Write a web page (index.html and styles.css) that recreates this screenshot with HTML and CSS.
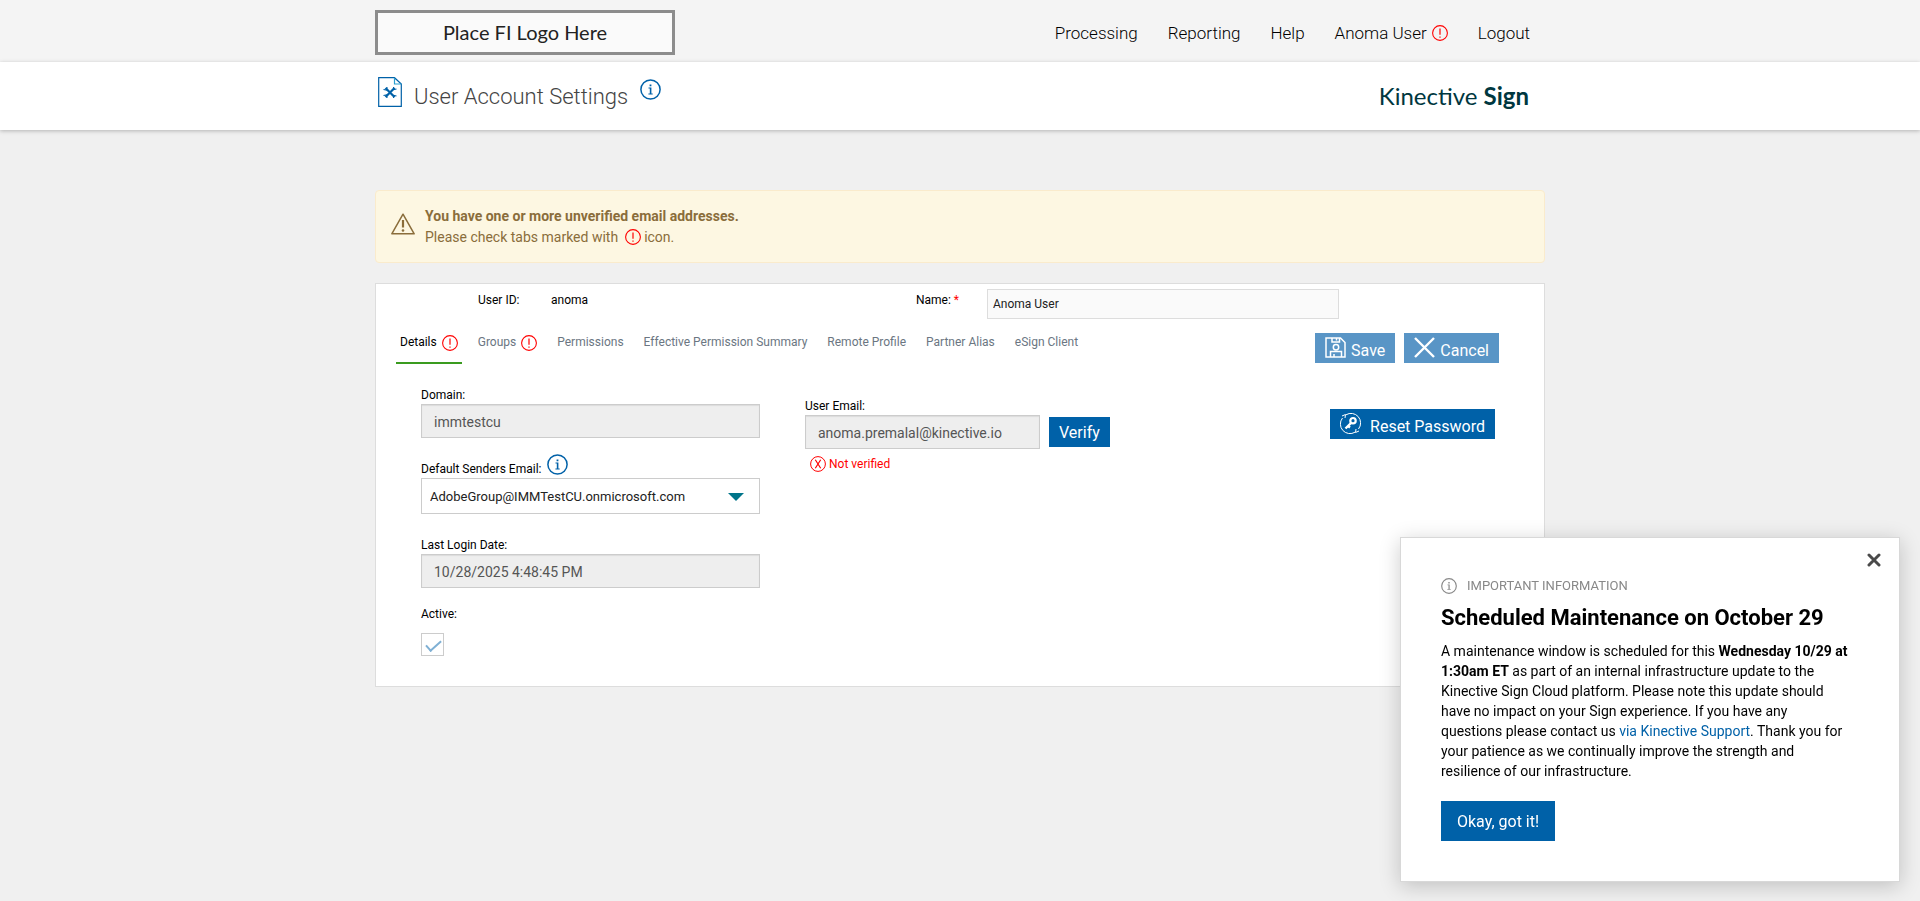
FILE: index.html
```html
<!DOCTYPE html>
<html lang="en">
<head>
  <meta charset="UTF-8" />
  <meta name="viewport" content="width=device-width, initial-scale=1.0"/>
  <title>User Account Settings</title>
  <link rel="stylesheet" href="styles.css">
</head>
<body>
  <!-- shared icons -->
  <svg class="sprite" aria-hidden="true">
    <symbol id="icon-alert" viewBox="0 0 16 16">
      <circle cx="8" cy="8" r="7.4" fill="none" stroke="currentColor" stroke-width="1.1"/>
      <path d="M8 3.5v6.3M8 11.4v1.3" stroke="currentColor" stroke-width="1.2"/>
    </symbol>
    <symbol id="icon-info" viewBox="0 0 21 21">
      <circle cx="10.5" cy="10.5" r="9.6" fill="none" stroke="currentColor" stroke-width="1.5"/>
      <path d="M9.6 5.4h1.8v1.8H9.6zM8.5 8.6h2.9v5.8h1.3v1H8.4v-1h1.4V9.6H8.5z" fill="currentColor"/>
    </symbol>
  </svg>

  <header class="topbar">
    <div class="container topbar-inner">
      <a href="#" class="fi-logo">Place FI Logo Here</a>
      <nav>
        <a href="#">Processing</a>
        <a href="#">Reporting</a>
        <a href="#">Help</a>
        <a href="#">Anoma User <svg class="icon-16 alert-icon"><use href="#icon-alert"/></svg></a>
        <a href="#">Logout</a>
      </nav>
    </div>
  </header>

  <div class="titlebar">
    <div class="container titlebar-inner">
      <svg class="page-icon" viewBox="0 0 24 30">
        <path d="M.7.7h15.8l6.8 6.3v22.300H.7z" fill="#fff" stroke="#0061a8" stroke-width="1.2"/>
        <path d="M16.500.7V7h6.800" fill="none" stroke="#2a9fd0" stroke-width="1.2"/>
        <path d="M7.500 11l9 9M16.500 11l-9 9" stroke="#0061a8" stroke-width="2.200"/>
        <path d="M5.500 12.500l3 .5.500-3M15.500 10l.5 2.500 2.500-.5M5.500 18.500l3-.5.500 3M15.500 21l.5-2.500 2.500.5" fill="none" stroke="#0061a8" stroke-width="1.200"/>
      </svg>
      <h1>User Account Settings</h1>
      <svg class="icon-21 info-icon title-info"><use href="#icon-info"/></svg>
      <div class="brand">Kinective <b>Sign</b></div>
    </div>
  </div>

  <main class="container">
    <div class="warning" role="alert">
      <svg class="warning-icon" viewBox="0 0 24 22">
        <path d="M12 1.200L23.200 20.800H.8z" fill="none" stroke="currentColor" stroke-width="1.500" stroke-linejoin="round"/>
        <path d="M12 7v7.500" stroke="currentColor" stroke-width="2.200"/>
        <circle cx="12" cy="17.500" r="1.300" fill="currentColor"/>
      </svg>
      <div>
        <strong>You have one or more unverified email addresses.</strong>
        <p>Please check tabs marked with <svg class="icon-16 alert-icon"><use href="#icon-alert"/></svg>icon.</p>
      </div>
    </div>

    <form class="panel">
      <div class="user-row">
        <span class="user-key">User ID:</span>
        <span class="user-value">anoma</span>
        <label for="name">Name: <span class="required">*</span></label>
        <input type="text" id="name" class="name-input" value="Anoma User" />
      </div>

      <div class="tab-row">
        <nav class="tabs">
          <a href="#details" class="active">Details <svg class="icon-16 alert-icon"><use href="#icon-alert"/></svg></a>
          <a href="#groups">Groups <svg class="icon-16 alert-icon"><use href="#icon-alert"/></svg></a>
          <a href="#permissions">Permissions</a>
          <a href="#summary">Effective Permission Summary</a>
          <a href="#remote">Remote Profile</a>
          <a href="#partner">Partner Alias</a>
          <a href="#esign">eSign Client</a>
        </nav>
        <div class="actions">
          <button type="button" class="btn faded">
            <svg class="icon-21" viewBox="0 0 21 21" fill="none" stroke="#fff" stroke-width="1.500">
              <path d="M1 1h14.500L20 5.500V20H1zM7 1v4h7.500V1M11.500 1v2.500M5.500 20v-5.500h11V20M9 17v3"/>
              <circle cx="11" cy="10.300" r="2.700"/>
            </svg>
            <span>Save</span>
          </button>
          <button type="button" class="btn faded">
            <svg class="icon-21" viewBox="0 0 21 21"><path d="M1 1l19 19M20 1L1 20" stroke="#fff" stroke-width="2.400"/></svg>
            <span>Cancel</span>
          </button>
        </div>
      </div>

      <div class="details" id="details">
        <div class="details-left">
          <div class="field">
            <label for="domain">Domain:</label>
            <input type="text" id="domain" value="immtestcu" disabled />
          </div>
          <div class="field sender-field">
            <label for="sender">Default Senders Email: <svg class="icon-21 info-icon"><use href="#icon-info"/></svg></label>
            <div class="select-box">
              <select id="sender">
                <option>AdobeGroup@IMMTestCU.onmicrosoft.com</option>
              </select>
            </div>
          </div>
          <div class="field">
            <label for="lastLogin">Last Login Date:</label>
            <input type="text" id="lastLogin" value="10/28/2025 4:48:45 PM" disabled />
          </div>
          <div class="field check-field">
            <label for="active">Active:</label>
            <input type="checkbox" id="active" checked disabled />
          </div>
        </div>

        <div class="details-middle">
          <div class="field">
            <label for="email">User Email:</label>
            <div class="email-row">
              <input type="text" id="email" value="anoma.premalal@kinective.io" disabled />
              <button type="button" class="btn">Verify</button>
            </div>
          </div>
          <p class="not-verified">
            <svg class="icon-16" viewBox="0 0 16 16">
              <circle cx="8" cy="8" r="7.400" fill="none" stroke="currentColor"/>
              <path d="M5.300 3.800l5.400 8.400M10.700 3.800l-5.400 8.400" stroke="currentColor" stroke-width="1.200"/>
            </svg>
            Not verified
          </p>
        </div>

        <div class="details-right">
          <button type="button" class="btn reset">
            <svg class="icon-21" viewBox="0 0 21 21" fill="none" stroke="#fff">
              <path d="M6 1.800A9.600 9.600 0 0 1 18.500 16M15 19.200A9.600 9.600 0 0 1 2.500 5" stroke-width="1"/>
              <path d="M2 3l3.500-1.500L5 5M19 18l-3.500 1.500L16 16" stroke-width="1"/>
              <circle cx="13" cy="7.700" r="2.700" stroke-width="2.200"/>
              <path d="M11 10l-5.500 5.500M8 13l2 1.500" stroke-width="2.400"/>
            </svg>
            <span>Reset Password</span>
          </button>
        </div>
      </div>
    </form>
  </main>

  <div class="notice" id="notice" role="dialog" aria-labelledby="noticeTitle">
    <button type="button" class="notice-close" aria-label="Close">
      <svg viewBox="0 0 14 14"><path d="M2 2l10 10M12 2L2 12" stroke="#4a4a4a" stroke-width="3" stroke-linecap="round"/></svg>
    </button>
    <div class="notice-kind"><svg class="icon-16"><use href="#icon-info"/></svg> IMPORTANT INFORMATION</div>
    <h2 id="noticeTitle">Scheduled Maintenance on October 29</h2>
    <p>A maintenance window is scheduled for this <strong>Wednesday 10/29 at 1:30am ET</strong> as part of an internal infrastructure update to the Kinective Sign Cloud platform. Please note this update should have no impact on your Sign experience. If you have any questions please contact us <a href="#">via Kinective Support</a>. Thank you for your patience as we continually improve the strength and resilience of our infrastructure.</p>
    <button type="button" class="btn notice-ok">Okay, got it!</button>
  </div>
</body>
</html>
```
FILE: styles.css
```css
* {
  box-sizing: border-box;
}
body {
  margin: 0;
  background: #f0f0f0;
  color: #000;
  font-family: Roboto, Arial, sans-serif;
  font-size: 12px;
  line-height: 16px;
}
a {
  color: inherit;
  text-decoration: none;
}
p, h1, h2 {
  margin: 0;
}
input, select, button {
  font-family: inherit;
}
.sprite {
  display: none;
}
.container {
  max-width: 1170px;
  margin: 0 auto;
}
.icon-16 {
  width: 16px;
  height: 16px;
  flex: none;
}
.icon-21 {
  width: 21px;
  height: 21px;
  flex: none;
}
.alert-icon {
  color: #f00;
}
.info-icon {
  color: #0061a8;
}

/* Header */
.topbar {
  background: #f4f4f4;
}
.topbar-inner {
  display: flex;
  justify-content: space-between;
  align-items: center;
  min-height: 62px;
  padding: 0 15px 0 0;
}
.fi-logo {
  width: 300px;
  margin-top: 3px;
  padding: 7px 0 8px;
  border: 3px solid #8c8c8c;
  background: #fafafa;
  color: #222;
  font-family: Lato, sans-serif;
  font-size: 20px;
  line-height: 24px;
  text-align: center;
}
.topbar nav {
  display: flex;
  gap: 30px;
  margin-top: 4px;
  font-size: 17px;
  font-weight: 300;
  line-height: 24px;
}
.topbar nav a {
  display: flex;
  align-items: center;
  gap: 5px;
}
.titlebar {
  background: #fff;
  box-shadow: 0 1px 4px rgba(0, 0, 0, 0.25);
}
.titlebar-inner {
  display: flex;
  align-items: center;
  min-height: 68px;
  padding: 0 16px 0 3px;
}
.page-icon {
  width: 24px;
  height: 30px;
  margin-bottom: 8px;
}
h1 {
  margin: 2px 12px 0 12px;
  color: #444;
  font-size: 22px;
  font-weight: 300;
  line-height: 32px;
}
.title-info {
  margin-bottom: 13px;
}
.brand {
  margin-left: auto;
  color: #003740;
  font-family: Lato, sans-serif;
  font-size: 24px;
  line-height: 32px;
}

/* Warning */
.warning {
  display: flex;
  align-items: center;
  gap: 10px;
  margin: 60px 0 20px;
  padding: 15px;
  border: 1px solid #faebcc;
  border-radius: 4px;
  background: #fdf7e2;
  color: #8a6d3b;
  font-size: 14px;
}
.warning-icon {
  width: 24px;
  height: 22px;
  margin-bottom: 5px;
}
.warning strong {
  display: block;
  line-height: 21px;
}
.warning p {
  display: flex;
  align-items: center;
  gap: 3px;
  line-height: 20px;
}
.warning p svg {
  margin-left: 4px;
}

/* Settings panel */
.panel {
  padding: 5px 45px 30px 45px;
  border: 1px solid #ddd;
  background: #fff;
}
.user-row {
  display: flex;
  align-items: flex-start;
  padding: 0 160px 0 57px;
}
.user-row > span, .user-row label {
  padding-top: 3px;
}
.user-key {
  width: 73px;
}
.user-value {
  flex: 1;
}
.user-row label {
  width: 71px;
}
.required {
  color: #f00;
}
.name-input {
  width: 352px;
  height: 30px;
  padding: 0 5px;
  border: 1px solid #ddd;
  background: #fafafa;
  color: #222;
  font-size: 12px;
}
.tab-row {
  display: flex;
  justify-content: space-between;
  align-items: flex-start;
  margin: 14px 0 23px -25px;
}
.tabs {
  display: flex;
  gap: 12px;
}
.tabs a {
  display: flex;
  align-items: flex-start;
  gap: 5px;
  height: 31px;
  padding: 1px 4px 0;
  color: #6b7682;
}
.tabs svg {
  margin-top: 1px;
}
.tabs .active {
  border-bottom: 2px solid #3a9b1f;
  color: #000;
}
.actions {
  display: flex;
  gap: 9px;
}
.btn {
  display: flex;
  align-items: center;
  height: 30px;
  padding: 0 10px;
  border: 0;
  background: #0061a8;
  color: #fff;
  font-size: 16px;
  cursor: pointer;
}
.btn span {
  padding-top: 6px;
}
.faded {
  gap: 5px;
  padding-bottom: 2px;
  background: #5995c6;
}
.reset {
  gap: 9px;
  padding-bottom: 2px;
}
.details {
  display: grid;
  grid-template-columns: 384px 1fr auto;
}
.field {
  display: flex;
  flex-direction: column;
  gap: 1px;
}
.field label {
  display: flex;
  align-items: flex-end;
  gap: 6px;
}
.field label svg {
  margin-bottom: 2px;
}
.details-left {
  width: 339px;
}
.details-left .field {
  margin-bottom: 16px;
}
.details-left .sender-field {
  margin-bottom: 23px;
}
.field input[type="text"] {
  width: 100%;
  height: 34px;
  padding: 2px 12px 0;
  border: 1px solid #ccc;
  background: #eee;
  box-shadow: inset 0 1px 1px rgba(0, 0, 0, 0.08);
  color: #555;
  font-size: 14px;
}
.select-box {
  position: relative;
}
.select-box::after {
  content: "";
  position: absolute;
  top: 15px;
  right: 16px;
  width: 16px;
  height: 8px;
  background: #00758a;
  clip-path: polygon(0 0, 100% 0, 50% 100%);
  pointer-events: none;
}
select {
  display: block;
  width: 100%;
  height: 36px;
  padding: 0 8px;
  border: 1px solid #ccc;
  border-radius: 0;
  background: #fff;
  color: #222;
  font-size: 13px;
  appearance: none;
}
.details-left .check-field {
  gap: 11px;
  margin: 18px 0 0;
}
input[type="checkbox"] {
  width: 23px;
  height: 23px;
  margin: 0;
  border: 1px solid #ccc;
  background: #fff;
  appearance: none;
}
input[type="checkbox"]:checked::before {
  content: "";
  display: block;
  width: 13px;
  height: 6px;
  margin: 6px 4px;
  border: solid #7fb0d4;
  border-width: 0 0 2px 2px;
  transform: rotate(-42deg);
}
.details-middle {
  padding-top: 11px;
}
.email-row {
  display: flex;
  align-items: center;
  gap: 9px;
}
.email-row input[type="text"] {
  width: 235px;
}
.not-verified {
  display: flex;
  align-items: center;
  gap: 3px;
  padding: 7px 5px;
  color: #f00;
}
.details-right {
  padding: 22px 4px 0 0;
}

/* Maintenance notice */
.notice {
  position: fixed;
  right: 20px;
  bottom: 19px;
  width: 500px;
  padding: 40px;
  border: 1px solid #d8d8d8;
  background: #fff;
  box-shadow: 0 4px 20px rgba(0, 0, 0, 0.2);
}
.notice-close {
  position: absolute;
  top: 15px;
  right: 18px;
  padding: 0;
  border: 0;
  background: none;
  cursor: pointer;
}
.notice-close svg {
  display: block;
  width: 14px;
  height: 14px;
}
.notice-kind {
  display: flex;
  align-items: center;
  gap: 10px;
  color: #888;
  font-size: 13px;
}
.notice h2 {
  margin: 10px 0 9px;
  font-size: 22px;
  line-height: 28px;
}
.notice p {
  max-width: 409px;
  font-size: 14px;
  line-height: 20px;
}
.notice p a {
  color: #0061a8;
}
.notice-ok {
  height: 40px;
  margin-top: 20px;
  padding: 0 16px;
}
```
